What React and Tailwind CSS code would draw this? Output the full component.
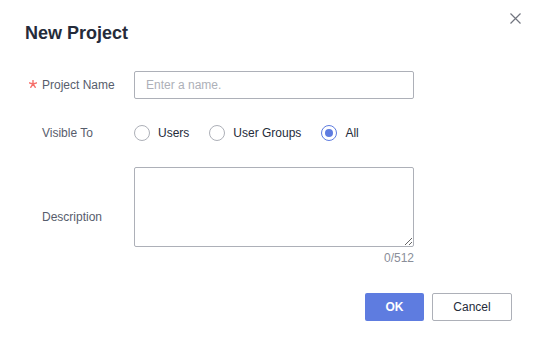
import { useState } from "react";

function Radio({ checked, label, onClick }) {
  return (
    <label onClick={onClick} className="flex items-center cursor-pointer">
      <span
        className={`w-[16px] h-[16px] rounded-full border flex items-center justify-center ${
          checked ? "border-[#5e7ce0]" : "border-[#adb0b8]"
        }`}
      >
        {checked && <span className="w-[8px] h-[8px] rounded-full bg-[#5e7ce0]" />}
      </span>
      <span className="ml-[8px] text-[12px] text-[#252b3a]">{label}</span>
    </label>
  );
}

export default function App() {
  const [name, setName] = useState("");
  const [visible, setVisible] = useState("all");
  const [desc, setDesc] = useState("");

  return (
    <div className="relative w-[539px] h-[350px] bg-white font-['Liberation_Sans',Arial,sans-serif]">
      {/* close */}
      <button className="absolute top-[13px] right-[18px] w-[11px] h-[11px]">
        <svg width="11" height="11" viewBox="0 0 11 11">
          <path d="M0.5 0.5L10.5 10.5M10.5 0.5L0.5 10.5" stroke="#71757f" strokeWidth="1.2" />
        </svg>
      </button>

      <div className="pt-[21px] pl-[25px]">
        <h2 className="text-[18px] leading-[24px] font-bold text-[#252b3a]">New Project</h2>
      </div>

      <div className="pl-[29px] mt-[26px]">
        {/* name */}
        <div className="flex items-center h-[28px]">
          <div className="w-[105px] flex items-center text-[12px] text-[#575d6c]">
            <span className="w-[13px] mb-[3px] flex">
              <svg width="8" height="8" viewBox="0 0 8 8">
                <path
                  d="M4 4V0.3M4 4L7.8 2.8M4 4L0.2 2.8M4 4L6.3 7.3M4 4L1.7 7.3"
                  stroke="#f66f6a"
                  strokeWidth="1.4"
                  strokeLinecap="round"
                />
              </svg>
            </span>
            <span>Project Name</span>
          </div>
          <input
            value={name}
            onChange={(e) => setName(e.target.value)}
            placeholder="Enter a name."
            className="w-[280px] h-[28px] px-[11px] border border-[#adb0b8] rounded-[2px] text-[12px] text-[#252b3a] placeholder:text-[#adb0b8] outline-none"
          />
        </div>

        {/* visible to */}
        <div className="flex items-center h-[28px] mt-[20px]">
          <div className="w-[105px] pl-[13px] text-[12px] text-[#575d6c]">Visible To</div>
          <div className="flex items-center gap-[20px]">
            <Radio label="Users" checked={visible === "users"} onClick={() => setVisible("users")} />
            <Radio label="User Groups" checked={visible === "groups"} onClick={() => setVisible("groups")} />
            <Radio label="All" checked={visible === "all"} onClick={() => setVisible("all")} />
          </div>
        </div>

        {/* description */}
        <div className="flex items-center mt-[20px]">
          <div className="w-[105px] pl-[13px] text-[12px] text-[#575d6c]">Description</div>
          <div className="w-[280px] flex flex-col">
            <textarea
              value={desc}
              onChange={(e) => setDesc(e.target.value.slice(0, 512))}
              className="w-[280px] h-[80px] px-[11px] py-[4px] border border-[#adb0b8] rounded-[2px] text-[12px] text-[#252b3a] outline-none resize-y block"
            />
            <div className="text-right text-[12px] leading-[16px] mt-[3px] text-[#8a8e99]">
              {desc.length}/512
            </div>
          </div>
        </div>
      </div>

      <div className="flex justify-end gap-[8px] pr-[27px] mt-[27px]">
        <button className="w-[59px] h-[28px] rounded-[2px] bg-[#5e7ce0] text-white text-[12px] font-bold">
          OK
        </button>
        <button className="w-[80px] h-[28px] rounded-[2px] border border-[#adb0b8] bg-white text-[#252b3a] text-[12px]">
          Cancel
        </button>
      </div>
    </div>
  );
}
